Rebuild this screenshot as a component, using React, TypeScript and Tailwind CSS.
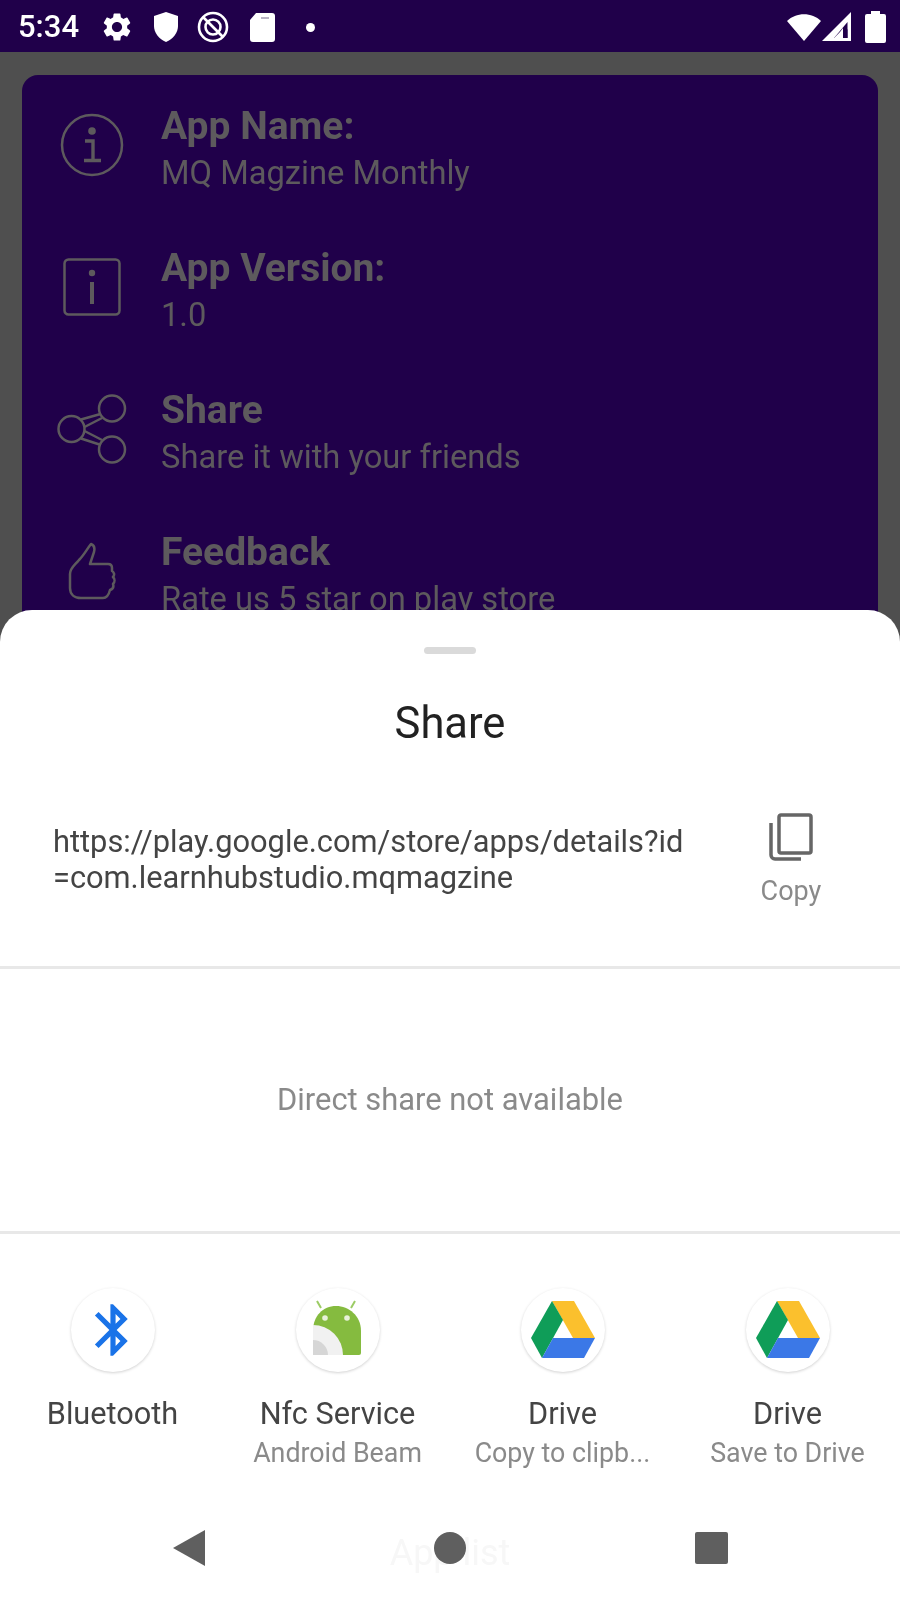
import React from "react";
import { MdSettings, MdBluetooth } from "react-icons/md";

const FONT = "font-['Roboto','Noto_Sans',sans-serif]";

function InfoCircle() {
  return (
    <svg width="64" height="64" viewBox="0 0 64 64" fill="none" stroke="#5d5a5d" strokeWidth="2.5">
      <circle cx="32" cy="32" r="30" />
      <circle cx="32" cy="18" r="3.8" fill="#5d5a5d" stroke="none" />
      <path d="M25 28h8v19M24 47.5h17M33 28v19" strokeWidth="3.4" />
    </svg>
  );
}
function InfoSquare() {
  return (
    <svg width="58" height="58" viewBox="0 0 58 58" fill="none" stroke="#5d5a5d" strokeWidth="2.5">
      <rect x="1.5" y="1.5" width="55" height="55" rx="4" />
      <circle cx="29" cy="15" r="3.2" fill="#5d5a5d" stroke="none" />
      <path d="M29 24v22" strokeWidth="4" />
    </svg>
  );
}
function ShareOutline() {
  return (
    <svg width="70" height="70" viewBox="0 0 70 70" fill="none" stroke="#5d5a5d" strokeWidth="2.5">
      <circle cx="14.5" cy="35" r="13" />
      <circle cx="55" cy="14.5" r="13" />
      <circle cx="55" cy="55.5" r="13" />
      <path d="M24 25.5L43.5 20M27.5 33L45 24M24 44.5L44 51M27.5 37L45 46" />
    </svg>
  );
}
function ThumbOutline() {
  return (
    <svg width="48" height="58" viewBox="0 0 48 58" fill="none" stroke="#5d5a5d" strokeWidth="2.5" strokeLinejoin="round">
      <path d="M23 2c3 1 4 4 3 8l-4 12h18c3 0 4 2 4 4v3c2 1 3 4 1 6 2 2 2 5 0 7 1 3 0 5-3 6-1 4-3 8-7 8H13C6 56 2 52 2 46V32c0-6 5-9 9-14 5-5 8-11 12-16z" />
    </svg>
  );
}

function Row({ icon, title, sub }: { icon: React.ReactNode; title: string; sub: string }) {
  return (
    <div className="flex h-[142px] items-center">
      <div className="flex w-[139px] justify-center pb-[4px]">{icon}</div>
      <div className="flex flex-col pt-[3px]">
        <span className="text-[39px] leading-[48px] font-bold text-[#5d5a5d]">{title}</span>
        <span className="text-[32.7px] leading-[46px] text-[#5d5a5d]">{sub}</span>
      </div>
    </div>
  );
}

function Drive() {
  return (
    <svg width="64" height="58" viewBox="0 0 64 58">
      <polygon points="21,0 43,0 64,37 42,37" fill="#fbc02d" />
      <polygon points="21,0 0,37 11,57 32,19" fill="#0f9d58" />
      <polygon points="11,57 53,57 64,37 22,37" fill="#3b78e7" />
    </svg>
  );
}
function Android() {
  return (
    <svg width="60" height="60" viewBox="0 0 60 60">
      <path d="M13 8L9 1M43 8L47 1" stroke="#9ccc65" strokeWidth="2" fill="none" />
      <path d="M5 31C5 16 15 6 28 6s25 10 25 25v22a2 2 0 0 1-2 2H5z" fill="#85bb3f" />
      <circle cx="17" cy="18" r="2.8" fill="#e8f2da" />
      <circle cx="39" cy="18" r="2.8" fill="#e8f2da" />
      <path d="M5 25a30 30 0 0 1 30 30H5z" fill="#f1f1f1" />
      <path d="M5 40a15 15 0 0 1 15 15H5z" fill="#d6d6d6" />
    </svg>
  );
}
function Target({ icon, label, sub }: { icon: React.ReactNode; label: string; sub?: string }) {
  return (
    <div className="flex w-[225px] flex-col items-center">
      <div className="flex h-[84px] w-[84px] items-center justify-center rounded-full bg-white shadow-[0_1px_3px_rgba(0,0,0,0.18)]">{icon}</div>
      <span className="mt-[22px] text-[30.7px] leading-[40px] text-[#444444]">{label}</span>
      {sub && <span className="mt-[1px] text-[26.8px] leading-[36px] text-[#8a8a8a]">{sub}</span>}
    </div>
  );
}

export default function App() {
  return (
    <div className={`relative h-[1600px] w-[900px] overflow-hidden bg-[#4f4f4f] blur-[0.6px] ${FONT}`}>
      <div className="flex h-[52px] items-center bg-[#20004a] pt-[2px] pl-[18px] text-white">
        <span className="w-[82px] text-[31px] font-medium">5:34</span>
        <MdSettings size={34} />
        <svg width="26" height="30" viewBox="0 0 26 30" className="ml-[19px]" fill="white"><path d="M13 0L1 4v10c0 7 5 13 12 16 7-3 12-9 12-16V4z" /></svg>
        <svg width="32" height="32" viewBox="0 0 32 32" className="ml-[18px]" fill="none" stroke="white" strokeWidth="2.6"><circle cx="16" cy="16" r="14" /><circle cx="16" cy="16" r="7.5" /><path d="M6 6l20 20" /></svg>
        <svg width="25" height="29" viewBox="0 0 25 29" className="ml-[21px]" fill="white"><path d="M6 0h16a3 3 0 0 1 3 3v23a3 3 0 0 1-3 3H3a3 3 0 0 1-3-3V7z" /><path d="M11 4h8v2h-8z" fill="#b9b3c4" /></svg>
        <div className="ml-[31px] h-[9px] w-[9px] rounded-full bg-white" />
        <div className="ml-auto flex items-center pr-[14px]">
          <svg width="34" height="30" viewBox="0 0 34 30" fill="white"><path d="M17 29L0 9C9 0 25 0 34 9z" /></svg>
          <svg width="30" height="30" viewBox="0 0 30 30" className="ml-[1px]" fill="none"><path d="M29 0v29H0z" fill="white" /><path d="M25.5 10v16H12z" fill="#20004a" /><path d="M25.5 17v9H19z" fill="#20004a" /><path d="M18 20l3-4v10h-9z" fill="white" /></svg>
          <svg width="21" height="32" viewBox="0 0 21 32" className="ml-[13px]" fill="white"><path d="M6 0h9v3h4a2 2 0 0 1 2 2v25a2 2 0 0 1-2 2H2a2 2 0 0 1-2-2V5a2 2 0 0 1 2-2h4z" /></svg>
        </div>
      </div>

      <div className="mx-[22px] mt-[23px] h-[600px] overflow-hidden rounded-[16px] bg-[#20004a] pt-[1px]">
        <Row icon={<InfoCircle />} title="App Name:" sub="MQ Magzine Monthly" />
        <Row icon={<InfoSquare />} title="App Version:" sub="1.0" />
        <Row icon={<ShareOutline />} title="Share" sub="Share it with your friends" />
        <Row icon={<ThumbOutline />} title="Feedback" sub="Rate us 5 star on play store" />
      </div>

      <div className="absolute inset-x-0 top-[610px] flex h-[990px] flex-col rounded-t-[32px] bg-white">
        <div className="mx-auto mt-[37px] h-[7px] w-[52px] rounded-full bg-[#dadada]" />
        <div className="mt-[43px] text-center text-[43.5px] leading-[54px] text-[#212121]">Share</div>
        <div className="mt-[33px] flex h-[182px] items-start">
          <div className="ml-[53px] mt-[40px] w-[640px] text-[30.8px] leading-[36px] whitespace-nowrap text-[#444444]">
            https://play.google.com/store/apps/details?id<br />=com.learnhubstudio.mqmagzine
          </div>
          <div className="ml-[48px] flex w-[100px] flex-col items-center pt-[29px]">
            <svg width="44" height="48" viewBox="0 0 44 48" fill="none" stroke="#666666" strokeWidth="3.5">
              <rect x="10" y="2" width="32" height="38" rx="2" />
              <path d="M2 10v32a4 4 0 0 0 4 4h26" />
            </svg>
            <span className="mt-[13px] text-[27px] leading-[34px] text-[#8a8a8a]">Copy</span>
          </div>
        </div>
        <div className="h-[3px] bg-[#e8e8e8]" />
        <div className="flex h-[262px] items-center justify-center text-[30.9px] text-[#8a8a8a]">Direct share not available</div>
        <div className="h-[3px] bg-[#e8e8e8]" />
        <div className="mt-[54px] flex">
          <Target icon={<MdBluetooth size={62} color="#1a73e8" />} label="Bluetooth" />
          <Target icon={<Android />} label="Nfc Service" sub="Android Beam" />
          <Target icon={<Drive />} label="Drive" sub="Copy to clipb..." />
          <Target icon={<Drive />} label="Drive" sub="Save to Drive" />
        </div>
        <div className="relative mt-auto flex h-[104px] items-center justify-center">
          <span className="absolute top-[30px] text-[36px] text-[#f7f7f7]">App list</span>
          <div className="relative flex w-[555px] items-center justify-between">
            <svg width="32" height="36" viewBox="0 0 32 36" fill="#5f5f5f"><path d="M32 0v36L0 18z" /></svg>
            <div className="h-[32px] w-[32px] rounded-full bg-[#5f5f5f]" />
            <div className="h-[32px] w-[33px] rounded-[2px] bg-[#5f5f5f]" />
          </div>
        </div>
      </div>
    </div>
  );
}
